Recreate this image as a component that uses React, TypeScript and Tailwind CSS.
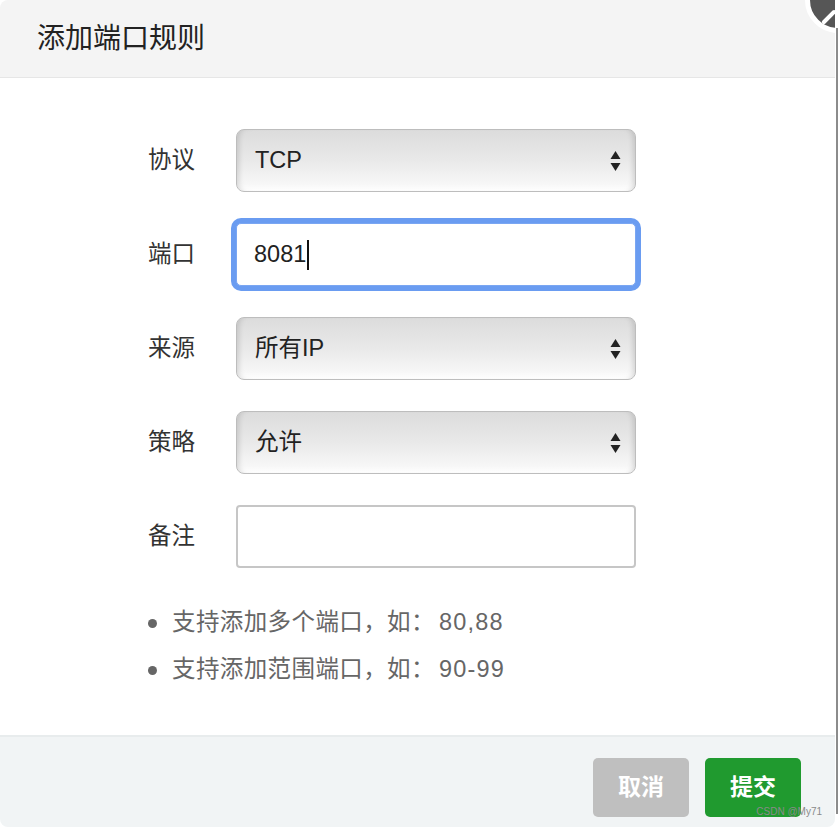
import React from 'react'

const font = { fontFamily: '"Liberation Sans", "Noto Sans CJK SC", sans-serif' }

const Arrows = () => (
    <svg width="11" height="22" viewBox="0 0 11 22" className="shrink-0">
        <path d="M5.5 1 L10.5 9 L0.5 9 Z" fill="#222" />
        <path d="M5.5 21 L10.5 13 L0.5 13 Z" fill="#222" />
    </svg>
)

const FakeSelect = ({ value }: { value: string }) => (
    <div className="flex items-center justify-between w-[400px] h-[63px] pl-[18px] pr-[14px] rounded-[8px] border border-[#bdbdbd] bg-gradient-to-b from-[#dcdcdc] via-[#e9e9e9] to-[#fbfbfb] shadow-[inset_6px_0_6px_-5px_rgba(0,0,0,0.18),inset_-6px_0_6px_-5px_rgba(0,0,0,0.18),inset_0_-6px_6px_-4px_rgba(255,255,255,0.9)]">
        <span className="text-[23.5px] text-[#222]">{value}</span>
        <Arrows />
    </div>
)

const Row = ({ label, children }: { label: string; children: React.ReactNode }) => (
    <div className="flex items-center h-[63px]">
        <div className="w-[88px] text-[23.5px] text-[#333]">{label}</div>
        {children}
    </div>
)

export default function App() {
    return (
        <div className="flex bg-white w-[838px] h-[830px]" style={font}>
            {/* Dialog */}
            <div className="relative flex flex-col w-[835px] h-[827px] bg-white rounded-l-[8px] rounded-br-[8px] overflow-hidden">
                {/* Header */}
                <div className="h-[78px] shrink-0 flex items-center pl-[37px] bg-[#f4f4f4] border-b border-[#e6e6e6]">
                    <span className="text-[28px] text-[#222]">添加端口规则</span>
                </div>

                {/* Body */}
                <div className="flex-1 pt-[51px] pl-[148px]">
                    <div className="flex flex-col gap-[31px]">
                        <Row label="协议">
                            <FakeSelect value="TCP" />
                        </Row>
                        <Row label="端口">
                            <div className="flex items-center w-[400px] h-[63px] pl-[17px] bg-white rounded-[5px] border border-[#7aa6f2] shadow-[0_0_0_5px_#6a9cf1]">
                                <span className="text-[23.5px] text-[#222]">8081</span>
                                <span className="w-[2px] h-[30px] bg-[#111] ml-[1px]" />
                            </div>
                        </Row>
                        <Row label="来源">
                            <FakeSelect value="所有IP" />
                        </Row>
                        <Row label="策略">
                            <FakeSelect value="允许" />
                        </Row>
                        <Row label="备注">
                            <div className="w-[400px] h-[63px] bg-white rounded-[4px] border-2 border-[#c6c6c6]" />
                        </Row>
                    </div>

                    <ul className="mt-[43px] flex flex-col gap-[23px] text-[23.5px] text-[#666]">
                        <li className="flex items-center h-[24px]">
                            <span className="w-[9px] h-[9px] rounded-full bg-[#666] mr-[15px]" />
                            <span className="tracking-[0.4px]">支持添加多个端口，如：</span>
                            <span className="ml-[4px] tracking-[1.2px]">80,88</span>
                        </li>
                        <li className="flex items-center h-[24px]">
                            <span className="w-[9px] h-[9px] rounded-full bg-[#666] mr-[15px]" />
                            <span className="tracking-[0.4px]">支持添加范围端口，如：</span>
                            <span className="ml-[4px] tracking-[1.2px]">90-99</span>
                        </li>
                    </ul>
                </div>

                {/* Footer */}
                <div className="h-[92px] shrink-0 flex items-start justify-end gap-[16px] pt-[21px] pr-[34px] bg-[#f1f4f5] border-t-2 border-[#e8eced]">
                    <button className="w-[96px] h-[59px] rounded-[5px] bg-[#bfbfbf] text-white text-[23px] font-bold">取消</button>
                    <button className="w-[96px] h-[59px] rounded-[5px] bg-[#209a2f] text-white text-[23px] font-bold">提交</button>
                    <span className="absolute right-[13px] bottom-[8px] text-[10px] text-[#8a8a8a]">CSDN @My71</span>
                </div>

                {/* Close button */}
                <div className="absolute -top-[33px] left-[805px] w-[66px] h-[66px] rounded-full bg-[#565656] border-[5px] border-white">
                    <svg width="56" height="56" viewBox="0 0 56 56" className="absolute inset-0">
                        <path d="M14 50 L24 40" stroke="#fff" strokeWidth="4" strokeLinecap="round" />
                    </svg>
                </div>
            </div>

            {/* right edge line */}
            <div className="w-[2px] mt-[28px] mb-[16px] ml-[1px] bg-[#8c8c8c]" />
        </div>
    )
}
